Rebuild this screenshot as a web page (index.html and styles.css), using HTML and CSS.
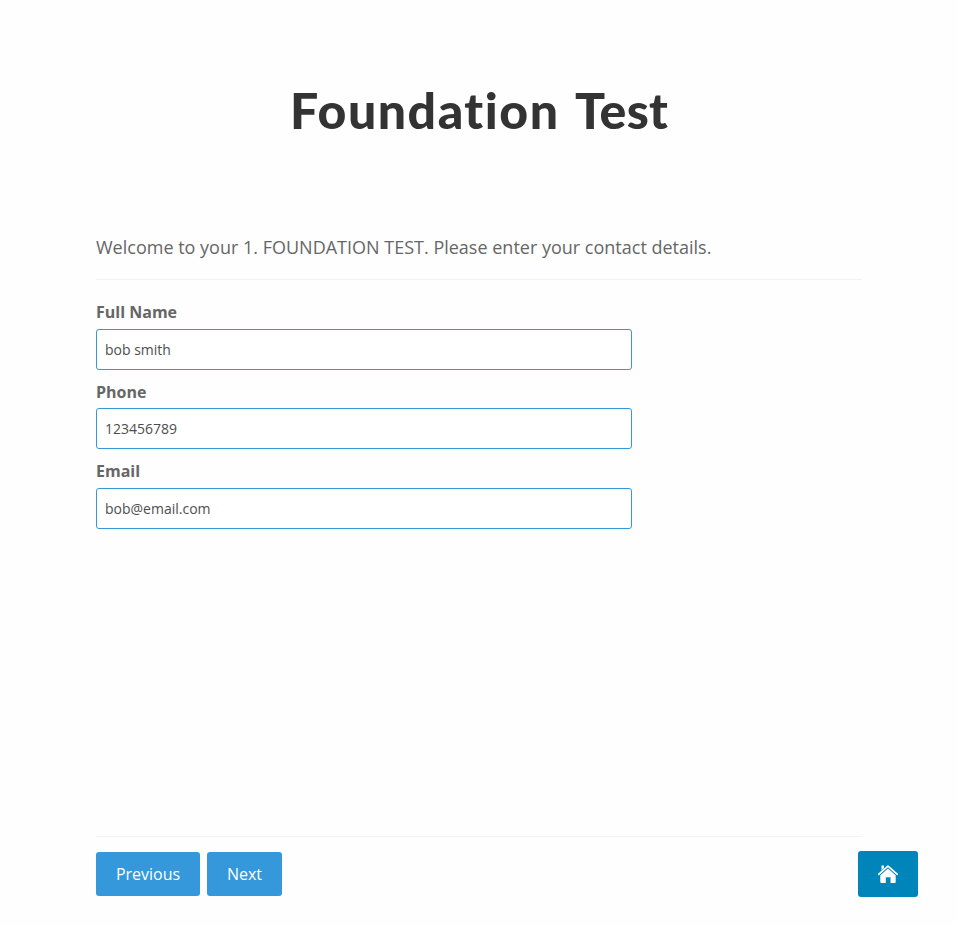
FILE: index.html
```html
<!DOCTYPE html>
<html lang="en">
<head>
<meta charset="utf-8">
<title>Foundation Test</title>
<link rel="stylesheet" href="styles.css">
</head>
<body>
<main class="page">
<h1 class="title"><svg class="title-art" viewBox="0 0 400 72"><text x="11" y="48.500" textLength="268" lengthAdjust="spacing">Foundation</text><text x="296" y="48.500" textLength="93" lengthAdjust="spacing">Test</text></svg></h1>
<p class="intro">Welcome to your 1. FOUNDATION TEST. Please enter your contact details.</p>
<form class="form">
<label class="field"><span class="label">Full Name</span><input class="input" type="text" value="bob smith"></label>
<label class="field field-phone"><span class="label">Phone</span><input class="input" type="text" value="123456789"></label>
<label class="field"><span class="label">Email</span><input class="input" type="text" value="bob@email.com"></label>
</form>
<footer class="footer">
<button class="btn btn-prev">Previous</button>
<button class="btn btn-next">Next</button>
<a class="home" href="#" aria-label="Home"><svg width="20" height="20" viewBox="0 0 20 20"><path d="M.6 10.300 10 2.200l9.400 8.100" fill="none" stroke="#fff" stroke-width="1.700" stroke-linecap="round" stroke-linejoin="round"/><path d="M3.500 1.500h2.500v2.500L3.500 6.200zM2.300 11.200 10 4.600l7.700 6.600V18q0 1-1 1h-4.200v-5.700H7.800V19H3.300q-1 0-1-1z" fill="#fff"/></svg></a>
</footer>
</main>
</body>
</html>
```
FILE: styles.css
```css
* { box-sizing: border-box; }
body { margin: 0; background: #fefefe; color: #666; font-family: "Open Sans", sans-serif; }
.page { width: 766px; height: 926px; margin-left: 96px; display: flex; flex-direction: column; }
.title { margin: 80px 0 0; height: 150px; text-align: center; }
.title-art { width: 400px; height: 72px; fill: #333; font: 900 50px Lato, sans-serif; font-variant-ligatures: none; }
.intro { margin: 0; height: 50px; border-bottom: 1px solid #f2f2f2; font-size: 18px; line-height: 35px; white-space: nowrap; }
.form { padding-top: 20px; height: 557px; border-bottom: 1px solid #f2f2f2; }
.field { display: block; height: 80px; }
.label { display: block; height: 29px; line-height: 25px; font-size: 16px; font-weight: 700; }
.input { display: block; width: 536px; height: 41px; padding: 0 8px; border: 1px solid #3498db; border-radius: 3px; background: #fff; color: #4e4e4e; font: 14px "Open Sans", sans-serif; }
.field-phone { height: 79px; }
.field-phone .label { height: 28px; }
.footer { display: flex; align-items: center; width: 822px; height: 74px; }
.btn { height: 44px; margin: 0 7px 0 0; padding: 0; border: 0; border-radius: 3px; background: #3498db; color: #fff; font: 16px "Open Sans", sans-serif; }
.btn-prev { width: 104px; }
.btn-next { width: 75px; }
.home { display: flex; align-items: center; justify-content: center; width: 60px; height: 46px; margin-left: auto; border-radius: 3px; background: #0085ba; }
```
